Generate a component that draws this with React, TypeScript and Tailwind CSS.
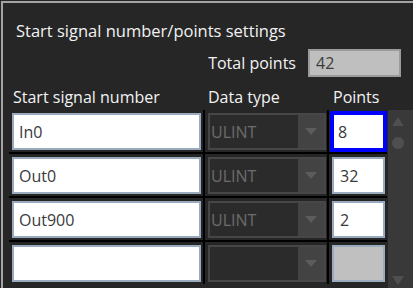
import React from 'react'

interface Row {
  signal: string
  type: string
  points: string
  focused?: boolean
  blank?: boolean
}

const rows: Row[] = [
  { signal: 'In0', type: 'ULINT', points: '8', focused: true },
  { signal: 'Out0', type: 'ULINT', points: '32' },
  { signal: 'Out900', type: 'ULINT', points: '2' },
  { signal: '', type: '', points: '', blank: true },
]

function Combo({ value }: { value: string }) {
  return (
    <div className="flex h-[37px] border-2 border-[#474747] bg-[#2b2b2b]">
      <div className="flex flex-1 items-center pl-[1px] text-[16px] text-[#6c6c6c]">{value}</div>
      <div className="flex w-[26px] items-center justify-center bg-[#434343]">
        <svg width="12" height="8" viewBox="0 0 12 8">
          <path d="M0 0 L12 0 L6 7 Z" fill="#5c5c5c" />
        </svg>
      </div>
    </div>
  )
}

export default function App() {
  return (
    <div
      className="h-[288px] w-[413px] overflow-hidden bg-[#262626] pl-px pt-px text-[#f2f2f2]"
      style={{ fontFamily: '"Open Sans", "Noto Sans", sans-serif' }}
    >
      <div className="h-full border-l-2 border-t-2 border-[#a3a3a3]">
        <p className="pl-[13px] pt-[17px] text-[16.5px] leading-[22px]">Start signal number/points settings</p>

        <div className="mt-[7px] flex items-center justify-end pr-[12px]">
          <span className="mr-[12px] text-[16px]">Total points</span>
          <div className="flex h-[28px] w-[93px] items-center border-2 border-[#9b9b9b] bg-[#bfbfbf] pl-[6px] text-[16px] text-[#3c3c3c]">
            42
          </div>
        </div>

        <div className="mt-[9px] grid grid-cols-[194px_122px_58px] gap-x-[2px] pl-[6px] text-[16px] leading-[22px]">
          <span className="pl-[4px]">Start signal number</span>
          <span className="pl-[3px]">Data type</span>
          <span className="pl-[4px]">Points</span>
        </div>

        <div className="mt-[2px] flex items-start">
          <div className="ml-[6px] grid grid-cols-[194px_122px_58px] gap-[2px] bg-black">
            {rows.map((row, i) => (
              <React.Fragment key={i}>
                <div className="bg-[#262626] pb-[2px] pl-[3px] pr-[2px] pt-[3px]">
                  <div className="flex h-[37px] items-center border-2 border-[#9aabc0] bg-white pl-[5px] text-[16px] text-[#3a3a3a]">
                    {row.signal}
                  </div>
                </div>
                <div className="bg-[#262626] pb-[2px] pl-[3px] pr-px pt-[3px]">
                  <Combo value={row.type} />
                </div>
                <div className="bg-[#262626] pb-[2px] pl-[3px] pr-[2px] pt-[3px]">
                  <div
                    className={
                      row.focused
                        ? 'flex h-[37px] items-center border-2 border-[#0000ff] bg-white pl-[4px] text-[16px] text-[#3a3a3a] outline-2 outline-[#0000ff]'
                        : row.blank
                          ? 'flex h-[37px] items-center border-2 border-[#9aabc0] bg-[#c0c0c0]'
                          : 'flex h-[37px] items-center border-2 border-[#9aabc0] bg-white pl-[6px] text-[16px] text-[#3a3a3a]'
                    }
                  >
                    {row.points}
                  </div>
                </div>
              </React.Fragment>
            ))}
          </div>

          <div className="ml-px flex h-[190px] w-[25px] flex-col items-start bg-[#393939] pl-[4px] pt-[7px]">
            <svg width="12" height="9" viewBox="0 0 12 9">
              <path d="M6 0 L12 9 L0 9 Z" fill="#4f4f4f" />
            </svg>
            <div className="mt-[11px] h-[12px] w-[12px] rounded-full bg-[#4f4f4f]" />
            <div className="h-[127px]" />
            <svg width="12" height="9" viewBox="0 0 12 9">
              <path d="M0 0 L12 0 L6 9 Z" fill="#4f4f4f" />
            </svg>
          </div>
        </div>
      </div>
    </div>
  )
}
